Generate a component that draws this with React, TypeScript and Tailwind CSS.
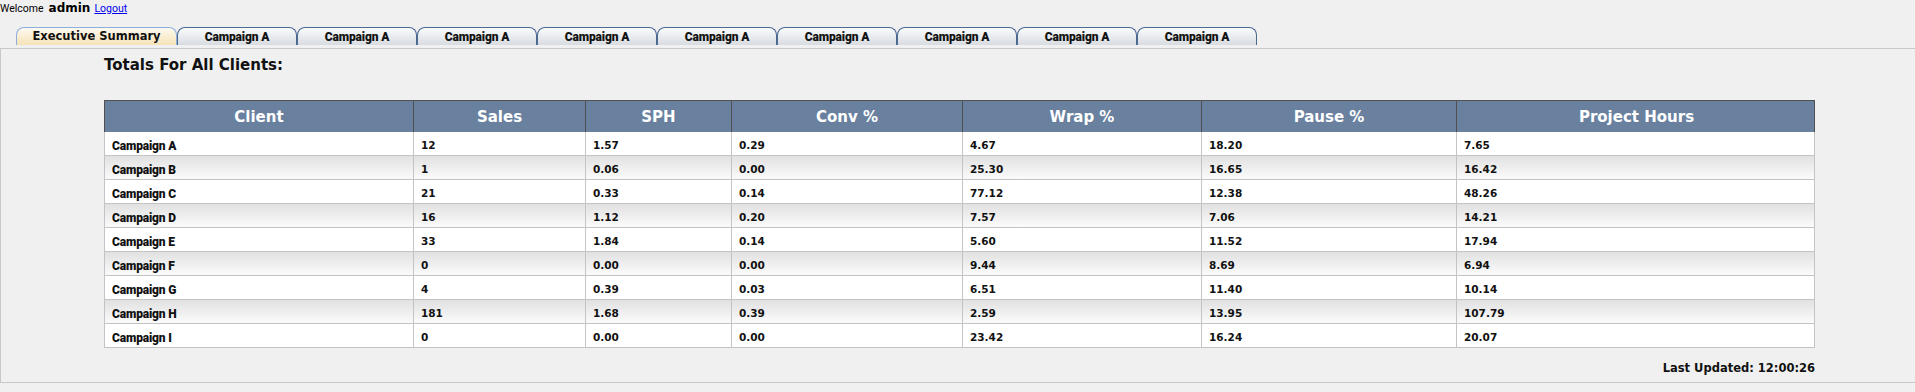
import React from 'react';

type Row = {
  client: string;
  sales: string;
  sph: string;
  conv: string;
  wrap: string;
  pause: string;
  hours: string;
};

const rows: Row[] = [
  { client: 'Campaign A', sales: '12', sph: '1.57', conv: '0.29', wrap: '4.67', pause: '18.20', hours: '7.65' },
  { client: 'Campaign B', sales: '1', sph: '0.06', conv: '0.00', wrap: '25.30', pause: '16.65', hours: '16.42' },
  { client: 'Campaign C', sales: '21', sph: '0.33', conv: '0.14', wrap: '77.12', pause: '12.38', hours: '48.26' },
  { client: 'Campaign D', sales: '16', sph: '1.12', conv: '0.20', wrap: '7.57', pause: '7.06', hours: '14.21' },
  { client: 'Campaign E', sales: '33', sph: '1.84', conv: '0.14', wrap: '5.60', pause: '11.52', hours: '17.94' },
  { client: 'Campaign F', sales: '0', sph: '0.00', conv: '0.00', wrap: '9.44', pause: '8.69', hours: '6.94' },
  { client: 'Campaign G', sales: '4', sph: '0.39', conv: '0.03', wrap: '6.51', pause: '11.40', hours: '10.14' },
  { client: 'Campaign H', sales: '181', sph: '1.68', conv: '0.39', wrap: '2.59', pause: '13.95', hours: '107.79' },
  { client: 'Campaign I', sales: '0', sph: '0.00', conv: '0.00', wrap: '23.42', pause: '16.24', hours: '20.07' },
];

const headers = ['Client', 'Sales', 'SPH', 'Conv %', 'Wrap %', 'Pause %', 'Project Hours'];

const tabs = Array.from({ length: 9 }, () => 'Campaign A');

const gridCols = 'grid grid-cols-[308px_172px_146px_231px_239px_255px_360px]';
const tahoma = 'font-["DejaVu_Sans",Verdana,sans-serif]';
const din = 'font-["Roboto","Liberation_Sans",sans-serif]';

const App: React.FC = () => {
  return (
    <div className="w-full h-[392px] bg-[#f0f0f0] text-black overflow-hidden">
      {/* welcome line */}
      <div className="h-[14px] flex items-end leading-none whitespace-nowrap">
        <span className={`${din} text-[10.5px]`}>Welcome</span>
        <span className={`${tahoma} font-bold text-[12px] ml-[5px]`}>admin</span>
        <a href="#" className={`${din} text-[10.5px] ml-[4px] text-[#0000ee] underline`}>
          Logout
        </a>
      </div>

      {/* tabs */}
      <div className="flex ml-[16px] mt-[13px] h-[18px]">
        <div
          className={`w-[161px] h-full rounded-t-[8px] border border-b-0 border-[#8eaedb] bg-gradient-to-b from-[#fefaf0] to-[#f5e2b6] flex items-center justify-center ${tahoma} font-bold text-[11.5px] text-[#111]`}
        >
          Executive Summary
        </div>
        {tabs.map((t, i) => (
          <div
            key={i}
            className={`w-[120px] h-full rounded-t-[8px] border border-b-0 border-[#4a6a90] bg-gradient-to-b from-[#fafbfc] to-[#d8dce2] flex items-center justify-center ${din} font-black text-[12px] tracking-[-0.15px] text-[#111]`}
          >
            {t}
          </div>
        ))}
      </div>

      {/* panel */}
      <div className="mt-[3px] h-[335px] border-t border-l border-b border-[#c8c8c8] pl-[103px] pt-[6px]">
        <div className={`${tahoma} font-bold text-[15px] leading-[20px] text-[#111]`}>
          Totals For All Clients:
        </div>

        <div className="w-[1711px] mt-[25px]">
          <div className={`${gridCols} h-[32px] bg-[#69819f] border-t border-x border-[#505050]`}>
            {headers.map((h, i) => (
              <div
                key={h}
                className={`flex items-center justify-center pt-[2px] ${tahoma} font-bold text-[15px] text-white ${
                  i > 0 ? 'border-l border-[#505050]' : ''
                }`}
              >
                {h}
              </div>
            ))}
          </div>

          {rows.map((r, idx) => {
            const cells = [r.sales, r.sph, r.conv, r.wrap, r.pause, r.hours];
            return (
              <div
                key={r.client}
                className={`${gridCols} h-[24px] border-x border-b border-[#c4c4c4] ${
                  idx % 2 === 1 ? 'bg-gradient-to-b from-[#e1e1e1] to-[#fbfbfb]' : 'bg-white'
                }`}
              >
                <div className={`flex items-center pl-[7px] pt-[4px] ${din} font-black text-[12px] tracking-[-0.15px] text-[#111]`}>
                  {r.client}
                </div>
                {cells.map((c, i) => (
                  <div
                    key={i}
                    className={`flex items-center pl-[7px] pt-[4px] border-l border-[#c4c4c4] ${tahoma} font-bold text-[10.5px] text-[#111]`}
                  >
                    {c}
                  </div>
                ))}
              </div>
            );
          })}

          <div className={`mt-[12px] text-right ${tahoma} font-bold text-[11.5px] leading-[16px] text-[#111]`}>
            Last Updated: 12:00:26
          </div>
        </div>
      </div>
    </div>
  );
};

export default App;
